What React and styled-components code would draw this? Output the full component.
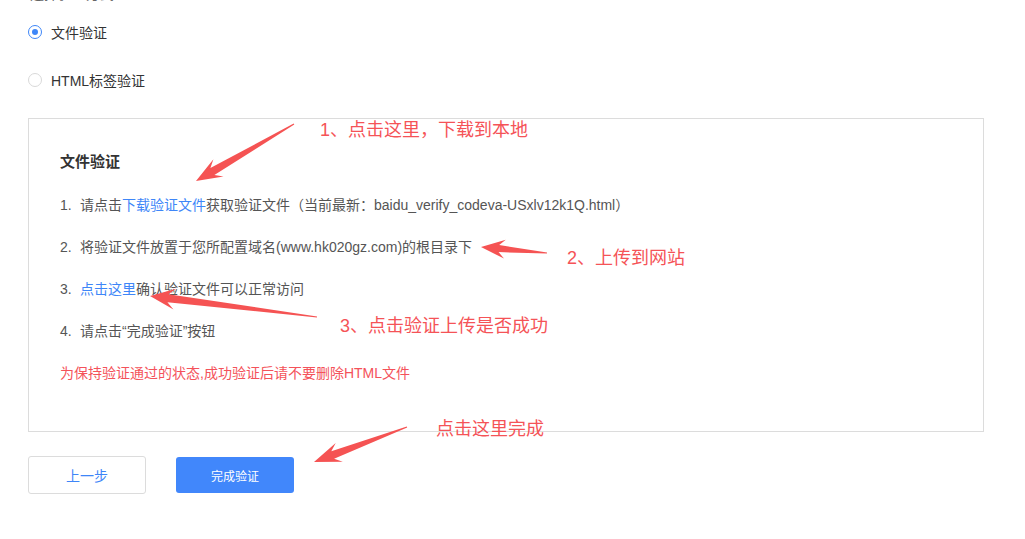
import React from "react";
import styled, { createGlobalStyle } from "styled-components";

const Global = createGlobalStyle`
  html, body { margin: 0; padding: 0; background: #fff; }
  body { font-family: "Liberation Sans", "Noto Sans CJK SC", sans-serif; }
`;

const Page = styled.div`
  position: relative;
  width: 1025px;
  height: 539px;
  overflow: hidden;
  padding-left: 28px;
  box-sizing: border-box;
  display: flex;
  flex-direction: column;
  align-items: flex-start;
`;

const CutLabel = styled.div`
  margin-top: -16px;
  height: 20px;
  line-height: 20px;
  font-size: 14px;
  color: #666;
  padding-left: 2px;
`;

const RadioGroup = styled.div`
  margin-top: 18px;
  display: flex;
  flex-direction: column;
  gap: 28px;
`;

const RadioRow = styled.label`
  display: flex;
  align-items: center;
  height: 20px;
  gap: 9px;
  font-size: 14px;
  color: #333;
`;

const RadioCircle = styled.span`
  width: 14px;
  height: 14px;
  box-sizing: border-box;
  border-radius: 50%;
  border: 1px solid ${(p) => (p.$checked ? "#3e86f8" : "#d9d9d9")};
  display: flex;
  align-items: center;
  justify-content: center;
  &::after {
    content: "";
    width: 6px;
    height: 6px;
    border-radius: 50%;
    background: #3e86f8;
    display: ${(p) => (p.$checked ? "block" : "none")};
  }
`;

const Box = styled.div`
  margin-top: 28px;
  width: 956px;
  height: 314px;
  box-sizing: border-box;
  border: 1px solid #dcdcdc;
  padding: 32px 0 0 31px;
  display: flex;
  flex-direction: column;
`;

const Title = styled.div`
  font-size: 15px;
  font-weight: bold;
  color: #333;
  line-height: 22px;
`;

const Steps = styled.div`
  margin-top: 22px;
  display: flex;
  flex-direction: column;
  gap: 22px;
`;

const Step = styled.div`
  display: flex;
  line-height: 20px;
  font-size: 14px;
  color: #555;
`;

const Num = styled.span`
  width: 20px;
  flex: none;
`;

const Link = styled.span`
  color: #3e86f8;
`;

const Note = styled.div`
  line-height: 20px;
  font-size: 14px;
  color: #f4525a;
`;

const Buttons = styled.div`
  margin-top: 24px;
  display: flex;
  align-items: center;
  gap: 30px;
`;

const Button = styled.button`
  width: 118px;
  height: ${(p) => (p.$primary ? "36px" : "38px")};
  box-sizing: border-box;
  border-radius: 3px;
  border: ${(p) => (p.$primary ? "none" : "1px solid #dcdcdc")};
  background: ${(p) => (p.$primary ? "#4187fb" : "#fff")};
  color: ${(p) => (p.$primary ? "#fff" : "#3e86f8")};
  font-family: inherit;
  font-size: ${(p) => (p.$primary ? "12px" : "14px")};
  padding: 0;
`;

const Overlay = styled.svg`
  position: absolute;
  left: 0;
  top: 0;
  pointer-events: none;
`;

const Annot = styled.div`
  position: absolute;
  font-size: 18px;
  line-height: 24px;
  color: #f55357;
  white-space: nowrap;
`;

function arrowPoints(tail, tip, h, hw, sw, notch) {
  const dx = tip[0] - tail[0];
  const dy = tip[1] - tail[1];
  const len = Math.hypot(dx, dy);
  const ux = dx / len;
  const uy = dy / len;
  const nx = -uy;
  const ny = ux;
  const base = [tip[0] - ux * h, tip[1] - uy * h];
  const join = [tip[0] - ux * (h - notch), tip[1] - uy * (h - notch)];
  const pts = [
    [tail[0] + nx * 0.6, tail[1] + ny * 0.6],
    [join[0] + nx * sw, join[1] + ny * sw],
    [base[0] + nx * hw, base[1] + ny * hw],
    tip,
    [base[0] - nx * hw, base[1] - ny * hw],
    [join[0] - nx * sw, join[1] - ny * sw],
    [tail[0] - nx * 0.6, tail[1] - ny * 0.6],
  ];
  return pts.map((p) => p[0].toFixed(1) + "," + p[1].toFixed(1)).join(" ");
}

const arrows = [
  { tail: [294, 124], tip: [196, 181], h: 26, hw: 10, sw: 4, notch: 7 },
  { tail: [547, 253], tip: [481, 247], h: 24, hw: 9.5, sw: 3.5, notch: 6 },
  { tail: [317, 317], tip: [150, 296], h: 25, hw: 10.5, sw: 4, notch: 7 },
  { tail: [407, 427], tip: [314, 462], h: 27, hw: 10, sw: 4, notch: 7 },
];

const annots = [
  { x: 320, y: 118, text: "1、点击这里，下载到本地" },
  { x: 567, y: 246, text: "2、上传到网站" },
  { x: 340, y: 314, text: "3、点击验证上传是否成功" },
  { x: 436, y: 417, text: "点击这里完成" },
];

export default function App() {
  return (
    <>
      <Global />
      <Page>
        <CutLabel>选择验证方式</CutLabel>
        <RadioGroup>
          <RadioRow>
            <RadioCircle $checked />
            文件验证
          </RadioRow>
          <RadioRow>
            <RadioCircle />
            HTML标签验证
          </RadioRow>
        </RadioGroup>
        <Box>
          <Title>文件验证</Title>
          <Steps>
            <Step>
              <Num>1.</Num>
              <span>
                请点击<Link>下载验证文件</Link>获取验证文件（当前最新：baidu_verify_codeva-USxlv12k1Q.html）
              </span>
            </Step>
            <Step>
              <Num>2.</Num>
              <span>将验证文件放置于您所配置域名(www.hk020gz.com)的根目录下</span>
            </Step>
            <Step>
              <Num>3.</Num>
              <span>
                <Link>点击这里</Link>确认验证文件可以正常访问
              </span>
            </Step>
            <Step>
              <Num>4.</Num>
              <span>请点击“完成验证”按钮</span>
            </Step>
            <Note>为保持验证通过的状态,成功验证后请不要删除HTML文件</Note>
          </Steps>
        </Box>
        <Buttons>
          <Button>上一步</Button>
          <Button $primary>完成验证</Button>
        </Buttons>

        <Overlay width="1025" height="539" viewBox="0 0 1025 539">
          {arrows.map((a, i) => (
            <polygon
              key={i}
              points={arrowPoints(a.tail, a.tip, a.h, a.hw, a.sw, a.notch)}
              fill="#f55353"
            />
          ))}
        </Overlay>
        {annots.map((a, i) => (
          <Annot key={i} style={{ left: a.x, top: a.y }}>
            {a.text}
          </Annot>
        ))}
      </Page>
    </>
  );
}
